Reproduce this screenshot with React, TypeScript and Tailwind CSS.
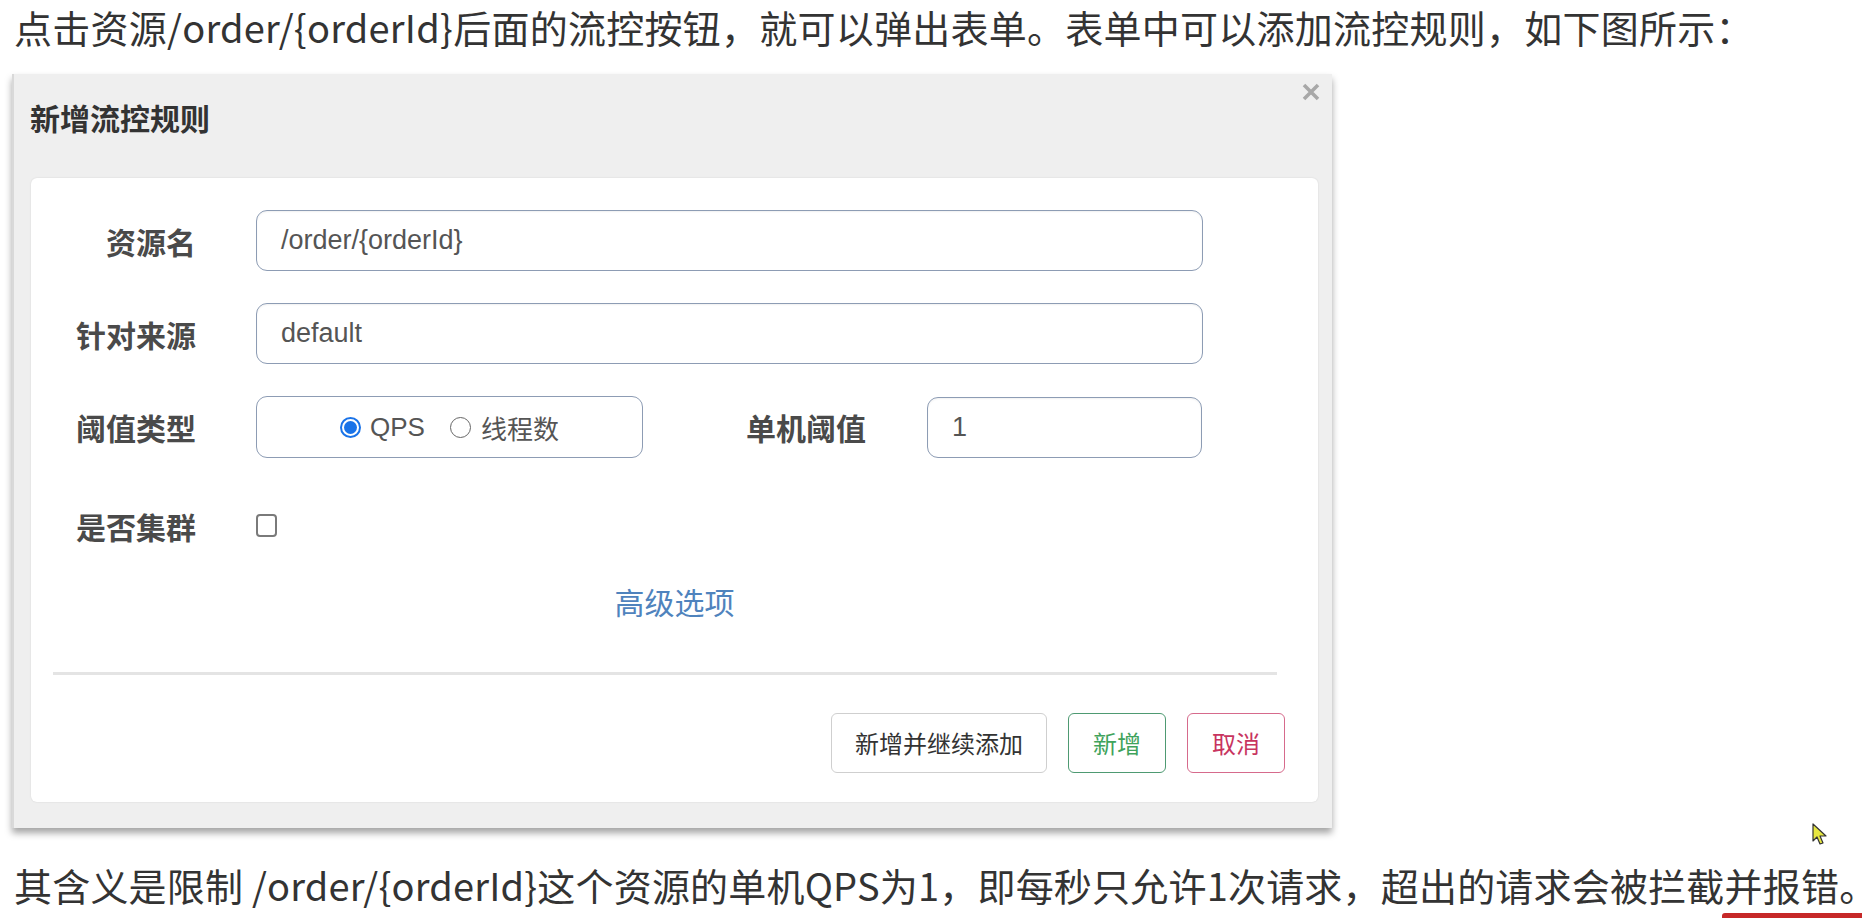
import React from "react";

function Label({ children }: { children: React.ReactNode }) {
  return (
    <div className="w-[165px] flex-none text-right text-[30px] leading-[40px] font-bold text-[#4a4a4a] [font-family:'Noto_Sans_CJK_SC',sans-serif]">
      {children}
    </div>
  );
}

function TextInput({ value, width }: { value: string; width: string }) {
  return (
    <div
      className={`${width} h-[61px] flex-none flex items-center pl-[24px] rounded-[11px] border-[1.5px] border-[#8d9cb4] bg-white shadow-[inset_0_1px_2px_rgba(0,0,0,0.06)] text-[27px] text-[#555] [font-family:'Liberation_Sans',Arial,sans-serif]`}
    >
      {value}
    </div>
  );
}

export default function App() {
  return (
    <div className="relative w-[1862px] h-[918px] overflow-hidden bg-white flex flex-col">
      <p className="pl-[14px] h-[54px] leading-[54px] text-[38px] tracking-[0.25px] text-[#333] whitespace-nowrap [font-family:'Noto_Sans_CJK_SC','Noto_Sans',sans-serif]">
        点击资源/order/{"{orderId}"}后面的流控按钮，就可以弹出表单。表单中可以添加流控规则，如下图所示：
      </p>

      <div className="relative ml-[12px] mt-[20px] w-[1320px] h-[754px] flex-none bg-[#efefef] border-l-2 border-[#d9d9d9] shadow-[0_5px_7px_rgba(0,0,0,0.36)] flex flex-col">
        <div className="h-[104px] flex-none pl-[16px] pt-[28px]">
          <div className="leading-[30px] text-[30px] font-bold text-[#333] [font-family:'Noto_Sans_CJK_SC',sans-serif]">
            新增流控规则
          </div>
        </div>
        <div className="absolute right-[8px] top-[5px] w-[26px] h-[26px] flex items-center justify-center">
          <svg width="18" height="18" viewBox="0 0 18 18">
            <path d="M2 2 L16 16 M16 2 L2 16" stroke="#a8a8a8" strokeWidth="3.6" strokeLinecap="butt" />
          </svg>
        </div>

        <div className="ml-[17px] w-[1287px] h-[624px] flex-none bg-white rounded-[6px] shadow-[0_0_2px_rgba(0,0,0,0.12)] pt-[32px] flex flex-col">
          <div className="flex items-center h-[61px]">
            <Label>资源名</Label>
            <div className="ml-[60px]">
              <TextInput value="/order/{orderId}" width="w-[947px]" />
            </div>
          </div>
          <div className="flex items-center h-[61px] mt-[32px]">
            <Label>针对来源</Label>
            <div className="ml-[60px]">
              <TextInput value="default" width="w-[947px]" />
            </div>
          </div>
          <div className="flex items-center h-[62px] mt-[32px]">
            <Label>阈值类型</Label>
            <div className="ml-[60px] w-[387px] h-[62px] flex-none rounded-[11px] border-[1.5px] border-[#8d9cb4] flex items-center justify-center text-[26px] text-[#555]">
              <span className="w-[21px] h-[21px] rounded-full border-2 border-[#1a73e8] flex items-center justify-center bg-white">
                <span className="w-[13px] h-[13px] rounded-full bg-[#1a73e8]" />
              </span>
              <span className="ml-[9px] [font-family:'Liberation_Sans',Arial,sans-serif]">QPS</span>
              <span className="ml-[25px] w-[21px] h-[21px] rounded-full border-[1.5px] border-[#666] bg-white" />
              <span className="ml-[10px] [font-family:'Noto_Sans_CJK_SC',sans-serif]">线程数</span>
            </div>
            <div className="ml-[103px] w-[124px] flex-none text-[30px] leading-[40px] font-bold text-[#4a4a4a] [font-family:'Noto_Sans_CJK_SC',sans-serif]">
              单机阈值
            </div>
            <div className="ml-[57px]">
              <TextInput value="1" width="w-[275px]" />
            </div>
          </div>
          <div className="flex items-center h-[61px] mt-[37px]">
            <Label>是否集群</Label>
            <div className="ml-[60px] w-[21px] h-[23px] rounded-[4px] border-2 border-[#7a7a7a] bg-white" />
          </div>
          <div className="mt-[25px] h-[40px] leading-[40px] text-center text-[30px] text-[#4f83bd] [font-family:'Noto_Sans_CJK_SC',sans-serif]">
            高级选项
          </div>
          <div className="mt-[51px] ml-[22px] mr-[41px] h-[3px] bg-[#e4e4e4]" />
          <div className="mt-[38px] h-[60px] flex justify-end pr-[33px] gap-[21px] [font-family:'Noto_Sans_CJK_SC',sans-serif] text-[24px]">
            <div className="w-[216px] h-[60px] rounded-[6px] border-[1.5px] border-[#cfcfcf] flex items-center justify-center text-[#333]">
              新增并继续添加
            </div>
            <div className="w-[98px] h-[60px] rounded-[6px] border-[1.5px] border-[#4e9a72] flex items-center justify-center text-[#3fa35c]">
              新增
            </div>
            <div className="w-[98px] h-[60px] rounded-[6px] border-[1.5px] border-[#d66a8c] flex items-center justify-center text-[#c8345f]">
              取消
            </div>
          </div>
        </div>
      </div>

      <p className="pl-[14px] mt-[30px] h-[54px] leading-[54px] text-[38px] tracking-[0.2px] text-[#333] whitespace-nowrap [font-family:'Noto_Sans_CJK_SC','Noto_Sans',sans-serif]">
        其含义是限制 /order/{"{orderId}"}这个资源的单机QPS为1，即每秒只允许1次请求，超出的请求会被拦截并报错。
      </p>

      <svg className="absolute left-[1812px] top-[823px]" width="16" height="23" viewBox="0 0 16 23">
        <path d="M1 1 L1 18 L5 14 L8 21 L11 20 L8 13 L14 13 Z" fill="#e6e640" stroke="#333" strokeWidth="1.2" strokeLinejoin="round" />
      </svg>
      <div className="absolute left-[1722px] top-[913px] w-[140px] h-[5px] bg-[#c62828] rounded-tl-[3px]" />
    </div>
  );
}
